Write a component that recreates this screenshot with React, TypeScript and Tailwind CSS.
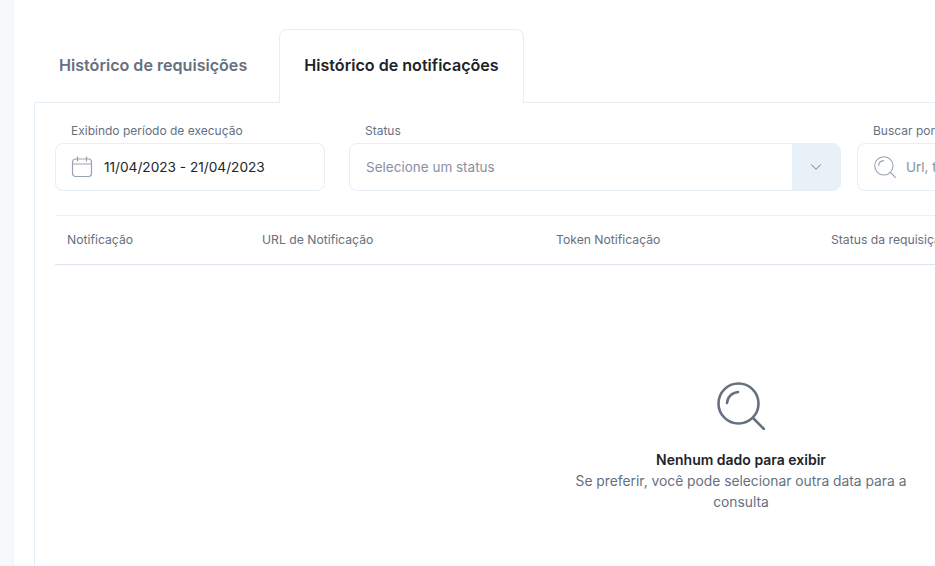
import { ChevronDown } from "lucide-react";

const FONT = "font-['Inter','Noto_Sans',sans-serif]";

const columns = [
  { label: "Notificação", width: "w-[195px]" },
  { label: "URL de Notificação", width: "w-[294px]" },
  { label: "Token Notificação", width: "w-[275px]" },
  { label: "Status da requisição", width: "w-[200px]" },
];

const CalendarIcon = () => (
  <svg width="22" height="22" viewBox="0 0 22 22" fill="none" stroke="#9aa1b0" strokeWidth="1.2">
    <rect x="1.5" y="3" width="19" height="17.5" rx="3" />
    <path d="M1.5 8h19M6.5 0.5v5M15.5 0.5v5" />
  </svg>
);

const SearchIcon = ({ size, color, width }: { size: number; color: string; width: number }) => (
  <svg width={size} height={size} viewBox="0 0 48 48" fill="none" stroke={color} strokeWidth={width} strokeLinecap="round">
    <circle cx="21.5" cy="21.5" r="20" />
    <path d="M36 36 47 47" />
    <path d="M10 21C10.5 15 15 10.5 21 10" />
  </svg>
);

export default function App() {
  return (
    <div className={`${FONT} flex h-[566px] w-[935px] overflow-hidden bg-white`}>
      <div className="h-full w-[14px] shrink-0 border-r border-[#eef1f7] bg-[#f6f8fc]" />
      <div className="w-[1434px] shrink-0 pl-5 pt-[29px]">
        {/* abas */}
        <div className="relative z-10 flex h-[74px]">
          <div className="flex h-[73px] w-[245px] items-center pl-[25px] text-[16.1px] font-semibold text-[#667080]">
            Histórico de requisições
          </div>
          <div className="flex h-[74px] w-[245px] items-center justify-center rounded-t-lg border border-b-0 border-[#e6eef6] bg-white pb-0.5 text-[16.1px] font-semibold text-[#1e2329]">
            Histórico de notificações
          </div>
        </div>

        <div className="-mt-px h-[600px] border border-[#e6eef6] px-5 pt-5">
          {/* filtros */}
          <div className="flex items-end">
            <div className="mr-6 w-[270px]">
              <div className="mb-1 pl-4 text-xs leading-4 text-[#667080]">Exibindo período de execução</div>
              <div className="flex h-12 items-center gap-[11px] rounded-lg border border-[#e6eef6] pl-[15px]">
                <CalendarIcon />
                <span className="text-[13.65px] text-[#1e2329]">11/04/2023 - 21/04/2023</span>
              </div>
            </div>
            <div className="mr-4 w-[492px]">
              <div className="mb-1 pl-4 text-xs leading-4 text-[#667080]">Status</div>
              <div className="flex h-12 items-center overflow-hidden rounded-lg border border-[#e6eef6]">
                <span className="flex-1 pl-4 text-[13.5px] text-[#8a919e]">Selecione um status</span>
                <div className="flex h-full w-[48px] items-center justify-center bg-[#e8f0f8]">
                  <ChevronDown size={18} strokeWidth={1.25} color="#667080" />
                </div>
              </div>
            </div>
            <div className="w-[300px]">
              <div className="mb-1 pl-4 text-xs leading-4 text-[#667080]">Buscar por</div>
              <div className="flex h-12 items-center gap-[10px] rounded-lg border border-[#e6eef6] pl-4">
                <SearchIcon size={22} color="#9aa1b0" width={2.4} />
                <span className="text-[13.5px] text-[#8a919e]">Url, token</span>
              </div>
            </div>
          </div>

          {/* tabela */}
          <div className="mt-6 flex h-[50px] items-center border-y border-t-[#edf1f6] border-b-[#dde6ee] pl-3">
            {columns.map((col) => (
              <div key={col.label} className={`${col.width} text-[12.2px] text-[#667080]`}>
                {col.label}
              </div>
            ))}
          </div>

          {/* vazio */}
          <div className="flex flex-col items-center pt-[117px]">
            <SearchIcon size={48} color="#667080" width={2.6} />
            <div className="mt-5 text-sm leading-5 font-semibold text-[#1e2329]">Nenhum dado para exibir</div>
            <div className="mt-px w-[350px] text-center text-[13.8px] leading-[21px] text-[#667080]">
              Se preferir, você pode selecionar outra data para a consulta
            </div>
          </div>
        </div>
      </div>
    </div>
  );
}
